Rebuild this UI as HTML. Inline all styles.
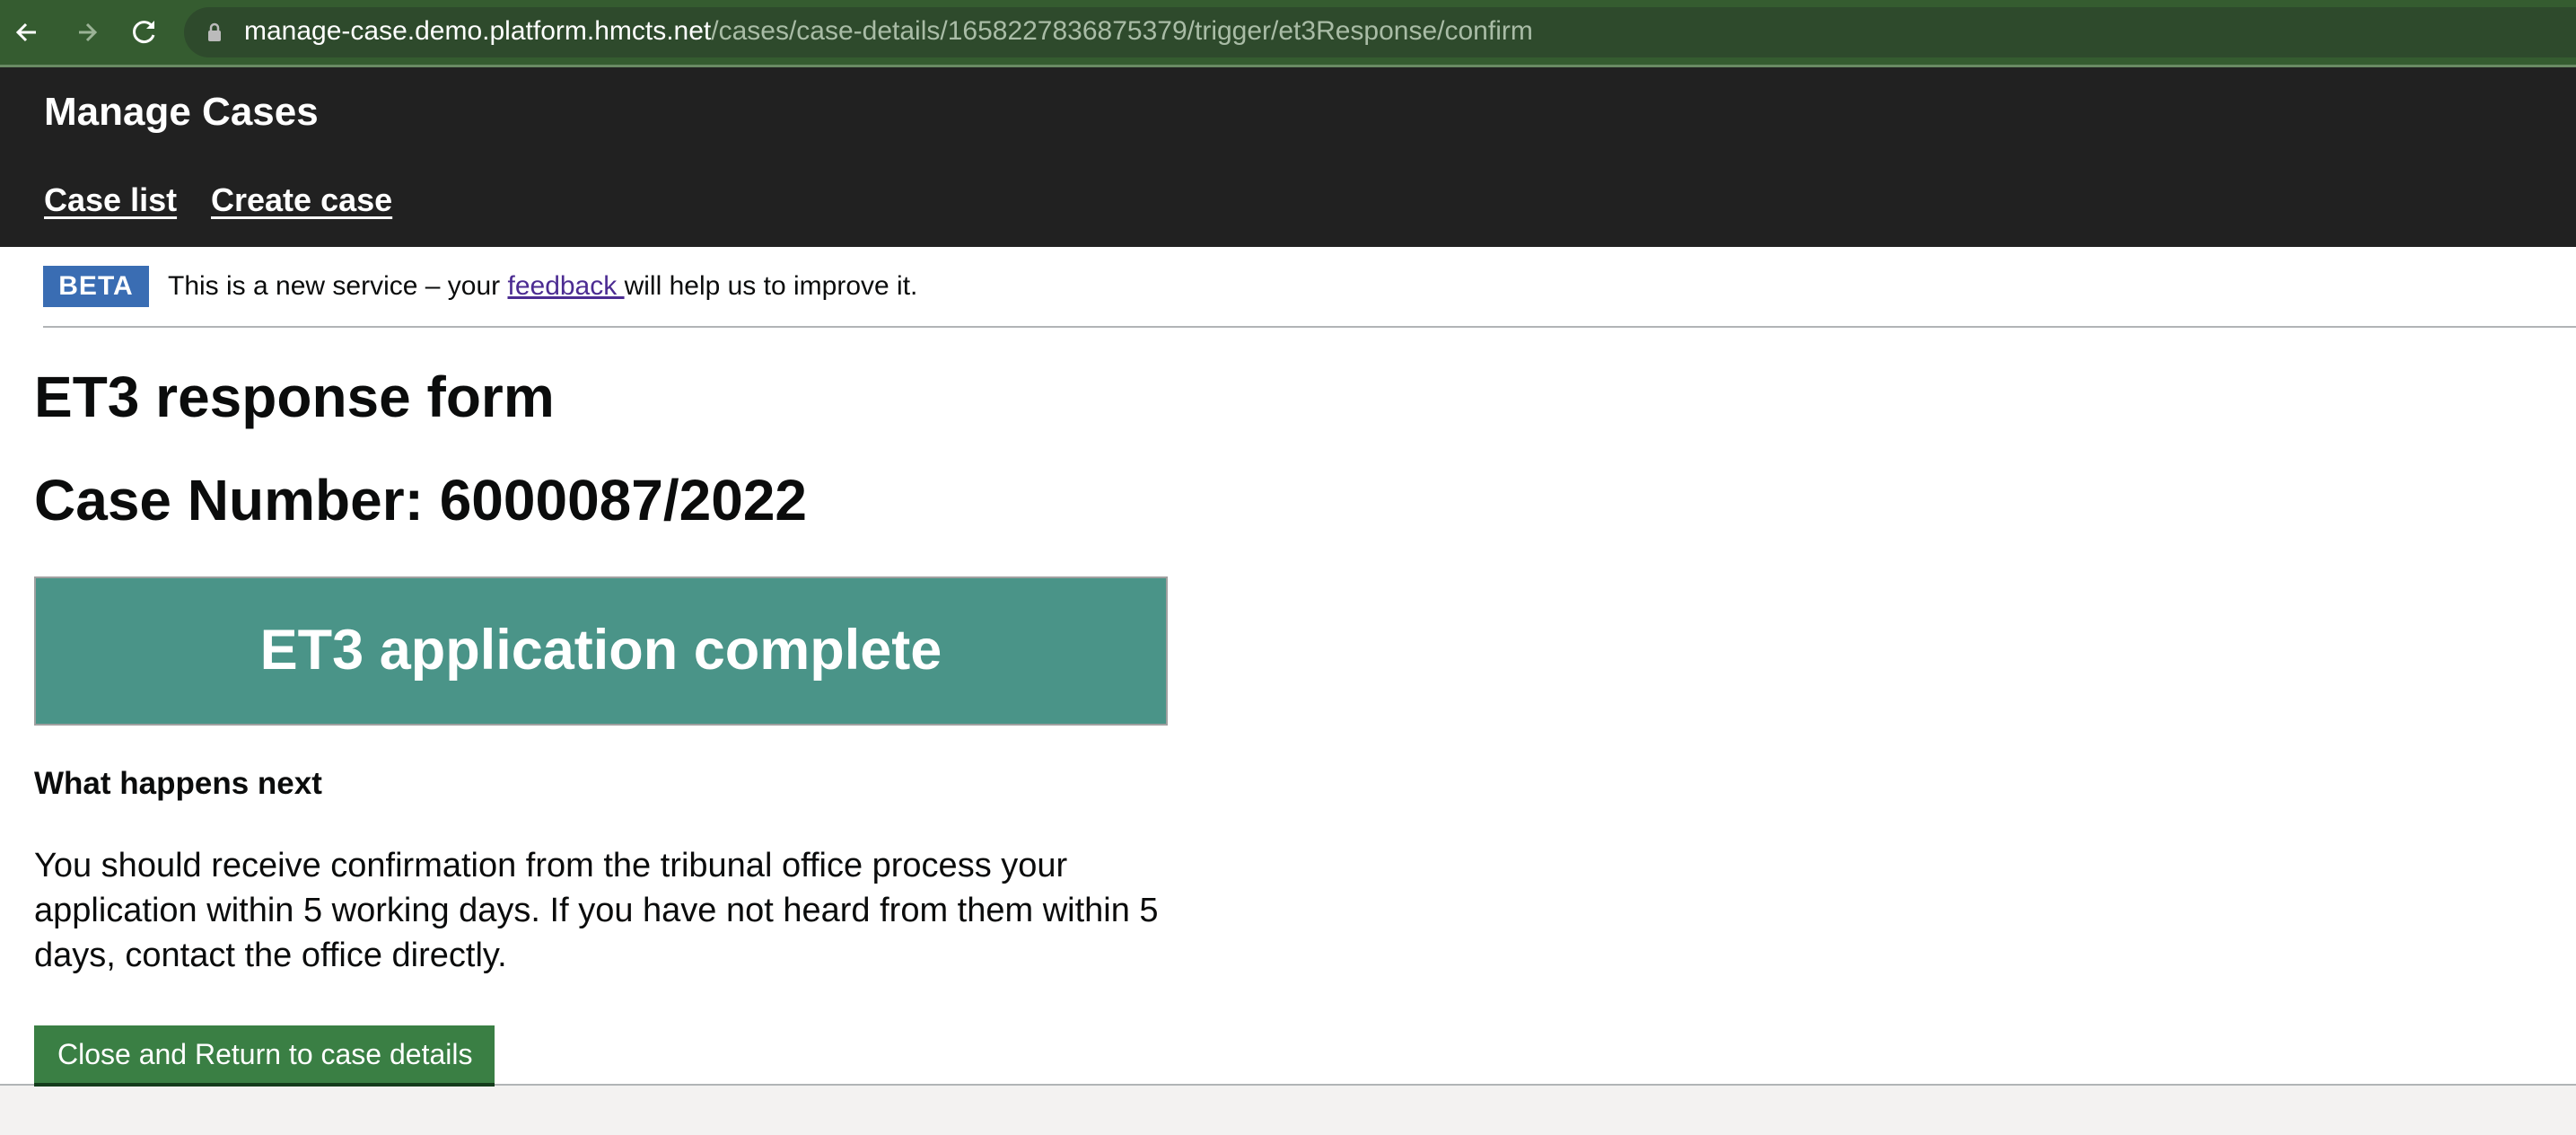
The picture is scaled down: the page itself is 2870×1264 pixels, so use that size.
<!DOCTYPE html>
<html><head><meta charset="utf-8"><style>
*{margin:0;padding:0;box-sizing:border-box}
body{width:2870px;height:1264px;overflow:hidden;background:#fff;font-family:"Liberation Sans",Arial,sans-serif;position:relative}
.tb{position:absolute;left:0;top:0;width:2870px;height:72px;background:#355c30}
.tbl{position:absolute;left:0;top:72px;width:2870px;height:3px;background:#6a8a64}
.pill{position:absolute;left:205px;top:8px;width:2700px;height:56px;border-radius:28px;background:#2e4a2c}
.url{position:absolute;left:272px;top:18px;font-size:30px;color:#fff;white-space:nowrap;letter-spacing:0}
.url span{color:#a9bca6}
.hd{position:absolute;left:0;top:75px;width:2870px;height:200px;background:#212121}
.t{position:absolute;color:#fff;font-weight:bold;white-space:nowrap}
.nav{text-decoration:underline;text-decoration-thickness:3px;text-underline-offset:6px}
.beta{position:absolute;left:48px;top:296px;width:118px;height:46px;background:#3a6db3;color:#fff;font-weight:bold;font-size:30px;text-align:center;line-height:46px;letter-spacing:1px}
.bt{position:absolute;left:187px;top:302px;font-size:30px;color:#0b0c0c;white-space:nowrap}
.bt a{color:#4c2c92;text-decoration:underline}
.hr{position:absolute;left:48px;top:363px;right:0;height:2px;background:#b1b4b6}
.h{position:absolute;left:38px;font-weight:bold;color:#0b0c0c;white-space:nowrap}
.panel{position:absolute;left:38px;top:642px;width:1263px;height:166px;background:#4a9488;border:2px solid #a0a0a0;color:#fff;font-weight:bold;font-size:63px;text-align:center;line-height:160px}
.p{position:absolute;left:38px;top:939px;width:1320px;font-size:38px;line-height:50px;color:#0b0c0c}
.btn{position:absolute;left:38px;top:1142px;width:513px;height:68px;background:#3a7f44;border-bottom:4px solid #143c1c;color:#fff;font-size:32px;line-height:64px;padding-left:26px;white-space:nowrap}
.ft{position:absolute;left:0;top:1207px;width:2870px;height:57px;background:#f3f2f1;border-top:2px solid #b1b4b6}
</style></head><body>
<div class="tb"></div><div class="tbl"></div>
<svg style="position:absolute;left:14px;top:18px" width="180" height="36" viewBox="0 0 180 36">
<path d="M26 18H6M15 9l-9 9 9 9" stroke="#fff" stroke-width="3" fill="none"/>
<path d="M74 18H92M83 9l9 9-9 9" stroke="#9bb396" stroke-width="3" fill="none"/>
<path d="M156 12a11 11 0 1 0 1 9" stroke="#fff" stroke-width="3" fill="none"/><path d="M158 5v9h-9z" fill="#fff"/>
</svg>
<div class="pill"></div>
<svg style="position:absolute;left:231px;top:25px" width="16" height="22" viewBox="0 0 16 22"><rect x="1" y="9" width="14" height="12" rx="2" fill="#bbb"/><path d="M4 10V6a4 4 0 0 1 8 0v4" stroke="#bbb" stroke-width="2.5" fill="none"/></svg>
<div class="url">manage-case.demo.platform.hmcts.net<span>/cases/case-details/1658227836875379/trigger/et3Response/confirm</span></div>
<div class="hd"></div>
<div class="t" style="left:49px;top:100px;font-size:44px">Manage Cases</div>
<div class="t nav" style="left:49px;top:202px;font-size:36px">Case list</div>
<div class="t nav" style="left:235px;top:202px;font-size:36px">Create case</div>
<div class="beta">BETA</div>
<div class="bt">This is a new service – your <a>feedback </a>will help us to improve it.</div>
<div class="hr"></div>
<div class="h" style="top:405px;font-size:64px">ET3 response form</div>
<div class="h" style="top:520px;font-size:64px">Case Number: 6000087/2022</div>
<div class="panel">ET3 application complete</div>
<div class="h" style="top:853px;font-size:35px">What happens next</div>
<div class="p">You should receive confirmation from the tribunal office process your application within 5 working days. If you have not heard from them within 5 days, contact the office directly.</div>
<div class="ft"></div>
<div class="btn">Close and Return to case details</div>
</body></html>
